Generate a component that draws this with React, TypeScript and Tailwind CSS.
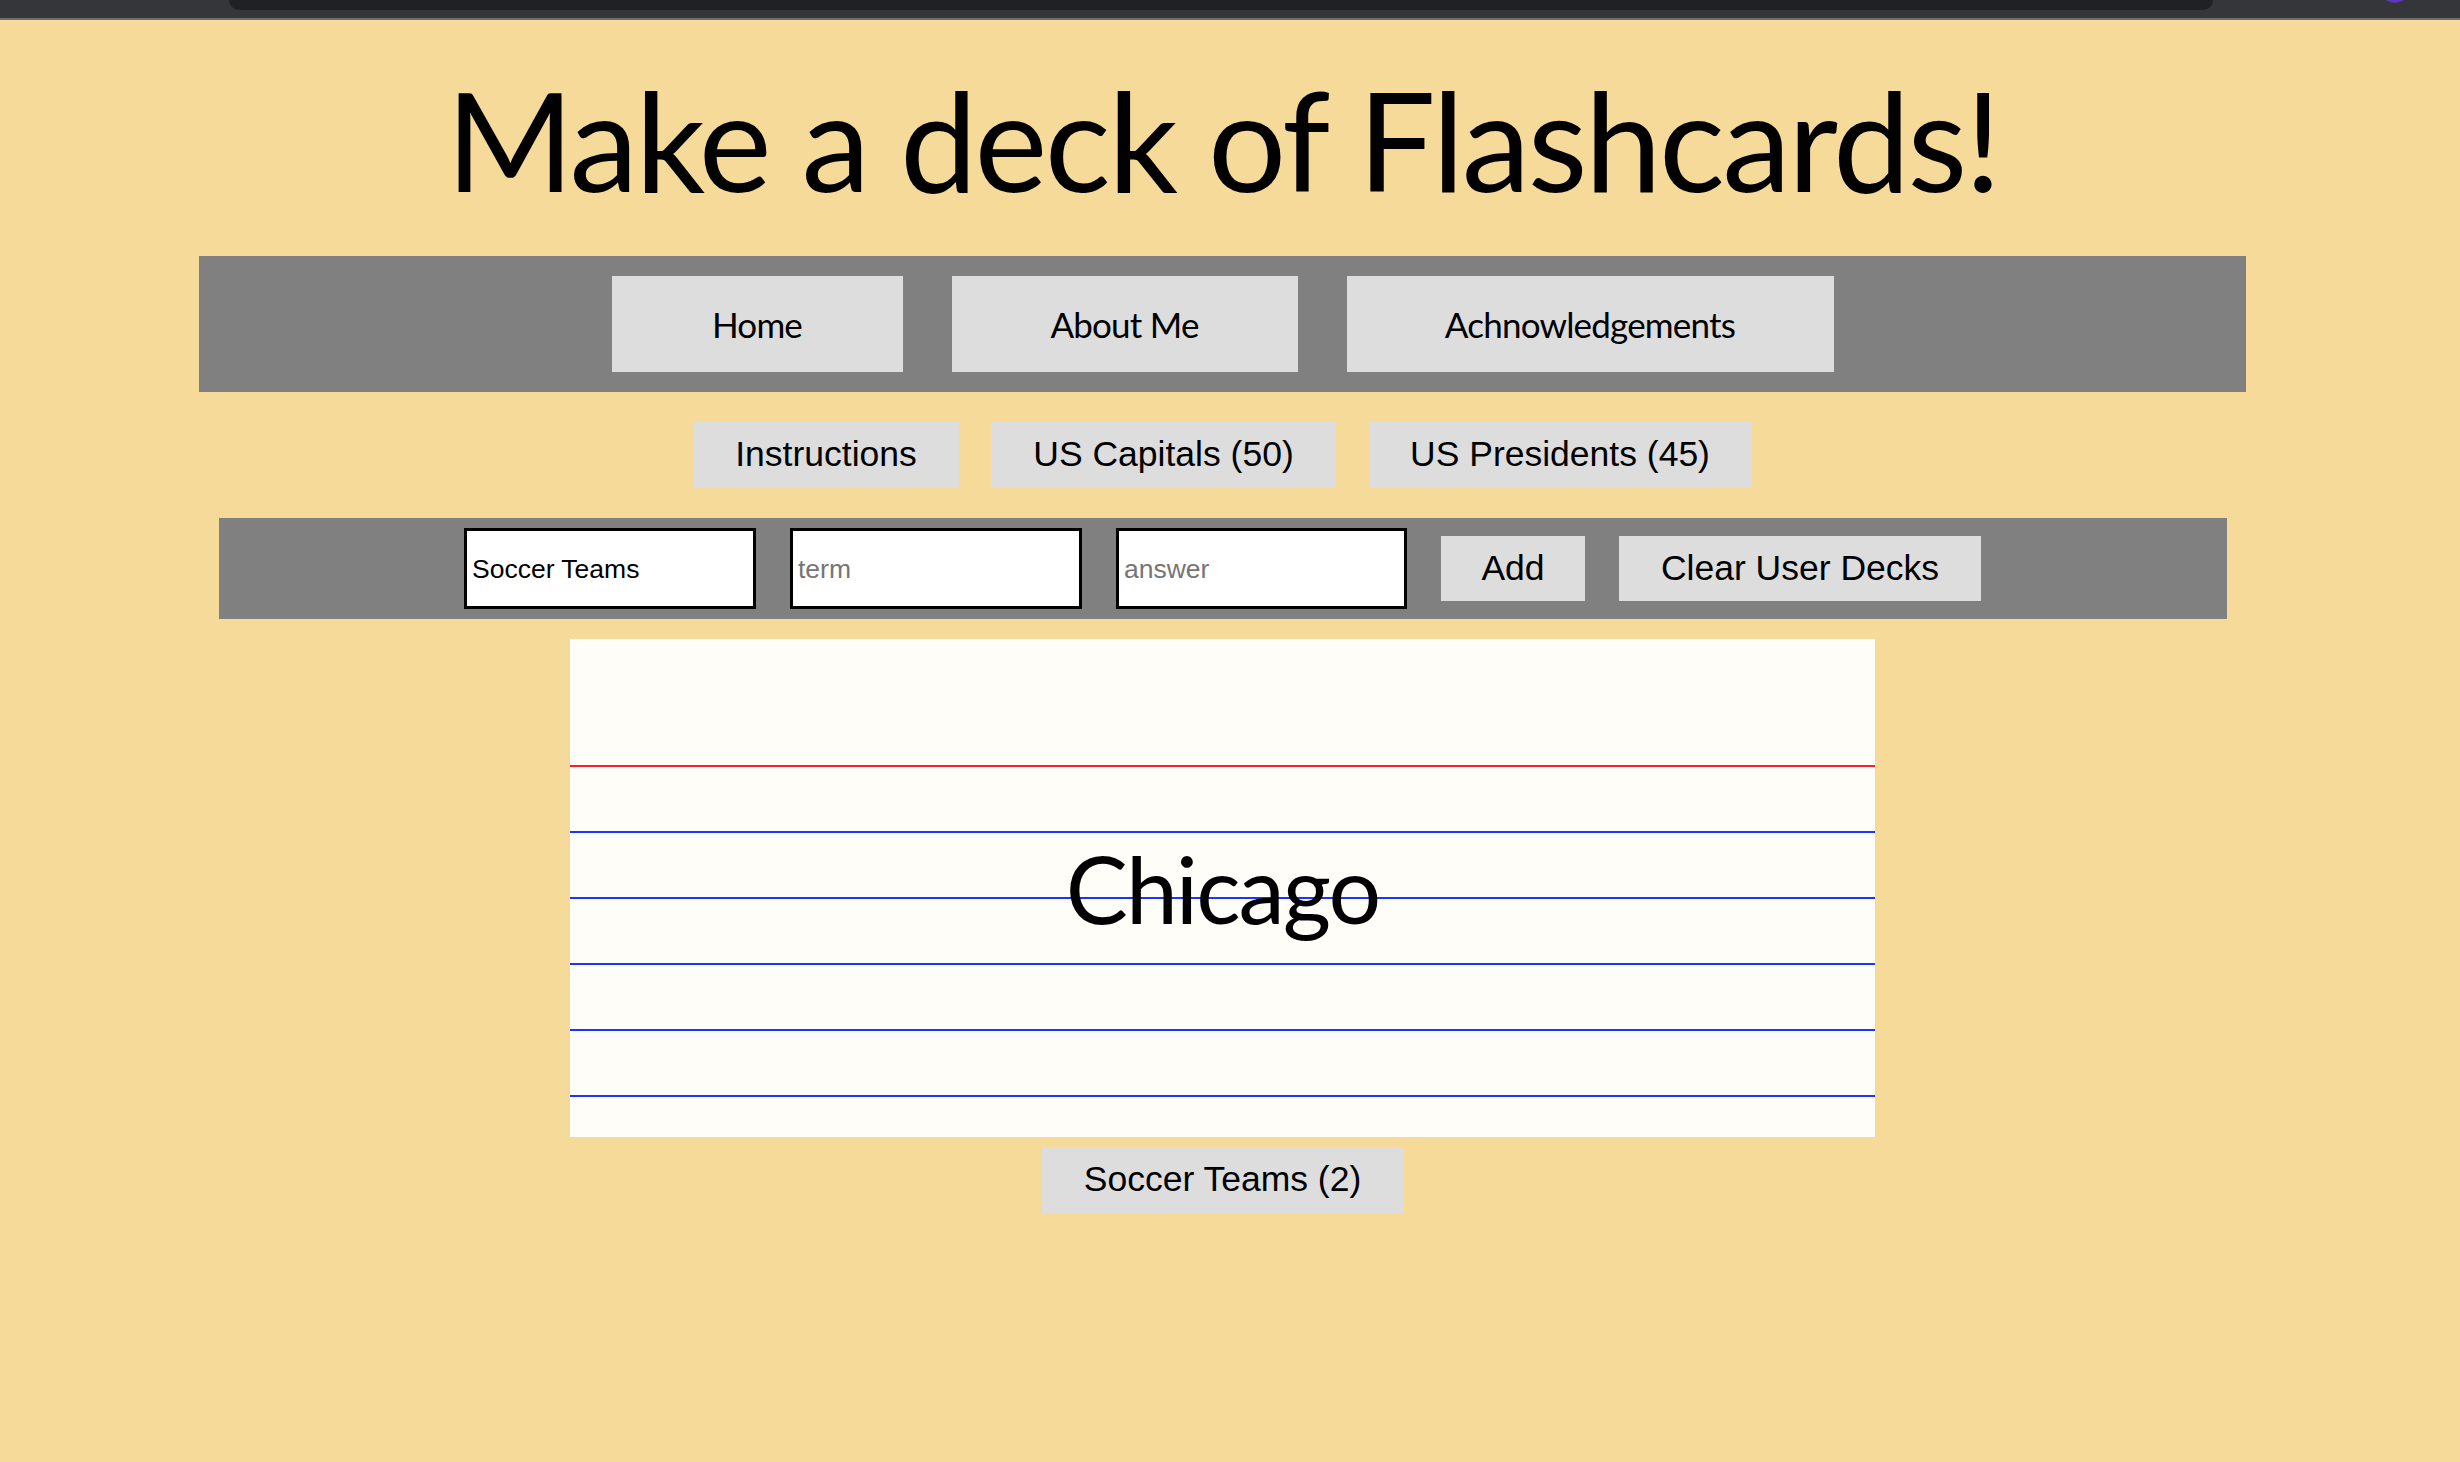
import React from "react";

const gill = { fontFamily: "Lato, 'Open Sans', sans-serif" };

export default function App() {
  return (
    <div className="min-h-[1462px] w-[2460px] bg-[#f6da9a] overflow-hidden">
      {/* browser chrome strip */}
      <div className="h-[18px] bg-[#35363a] flex items-start overflow-hidden">
        <div className="ml-[229px] w-[1984px] h-[10px] bg-[#202124] rounded-b-[15px]" />
        <div className="ml-[167px] w-[30px] h-[30px] -mt-[27px] rounded-full bg-[#5b34b8]" />
      </div>
      <div className="h-[2px] bg-[#6e6e6e]" />

      <div className="w-[2445px] flex flex-col items-center">
        <div className="h-[236px] pt-[50px] flex justify-center">
          <h1
            className="text-[138px] leading-none tracking-[-2.7px] text-black font-normal whitespace-nowrap"
            style={gill}
          >
            Make a deck of Flashcards!
          </h1>
        </div>

        <nav className="w-[2047px] h-[136px] bg-[#808080] flex items-center justify-center gap-[49px]">
          {[
            ["Home", "w-[291px]"],
            ["About Me", "w-[346px]"],
            ["Achnowledgements", "w-[487px]"],
          ].map(([t, w]) => (
            <div
              key={t}
              className={`${w} h-[96px] bg-[#dddddd] flex items-center justify-center text-[35px] tracking-[-0.8px] text-black`}
              style={gill}
            >
              {t}
            </div>
          ))}
        </nav>

        <div
          className="mt-[30px] flex gap-[32.5px] text-[35.5px] text-black"
          style={{ fontFamily: "'Liberation Sans', Arial, sans-serif" }}
        >
          <div className="w-[265px] h-[66px] bg-[#dddddd] flex items-center justify-center">Instructions</div>
          <div className="w-[345px] h-[66px] bg-[#dddddd] flex items-center justify-center">US Capitals (50)</div>
          <div className="w-[383px] h-[66px] bg-[#dddddd] flex items-center justify-center">US Presidents (45)</div>
        </div>

        <div
          className="mt-[30px] w-[2008px] h-[101px] bg-[#808080] flex items-center justify-center gap-[34px]"
          style={{ fontFamily: "'Liberation Sans', Arial, sans-serif" }}
        >
          <input
            className="w-[292px] h-[81px] border-[3px] border-black bg-white pl-[5px] pt-[2px] text-[26.5px] text-black outline-none placeholder:text-[#757575]"
            defaultValue="Soccer Teams"
          />
          <input
            className="w-[292px] h-[81px] border-[3px] border-black bg-white pl-[5px] pt-[2px] text-[26.5px] text-black outline-none placeholder:text-[#757575]"
            placeholder="term"
          />
          <input
            className="w-[291px] h-[81px] border-[3px] border-black bg-white pl-[5px] pt-[2px] text-[26.5px] text-black outline-none placeholder:text-[#757575]"
            placeholder="answer"
          />
          <div className="w-[144px] h-[65px] bg-[#dddddd] flex items-center justify-center text-[35.5px] text-black">Add</div>
          <div className="w-[362px] h-[65px] bg-[#dddddd] flex items-center justify-center text-[35.5px] text-black">Clear User Decks</div>
        </div>

        <div className="mt-[20px] w-[1305px] h-[498px] bg-[#fffdf8] grid">
          <div className="col-start-1 row-start-1 flex flex-col">
            <div className="h-[128px] border-b-[2px] border-[#fe1c28]" />
            <div className="h-[66px] border-b-[2px] border-[#1c34fe]" />
            <div className="h-[66px] border-b-[2px] border-[#1c34fe]" />
            <div className="h-[66px] border-b-[2px] border-[#1c34fe]" />
            <div className="h-[66px] border-b-[2px] border-[#1c34fe]" />
            <div className="h-[66px] border-b-[2px] border-[#1c34fe]" />
          </div>
          <div className="col-start-1 row-start-1 flex items-center justify-center">
            <span className="text-[93px] leading-none tracking-[-2px] text-black" style={gill}>
              Chicago
            </span>
          </div>
        </div>

        <div
          className="mt-[10px] w-[362px] h-[66px] bg-[#dddddd] flex items-center justify-center text-[35.5px] text-black"
          style={{ fontFamily: "'Liberation Sans', Arial, sans-serif" }}
        >
          Soccer Teams (2)
        </div>
      </div>
    </div>
  );
}
